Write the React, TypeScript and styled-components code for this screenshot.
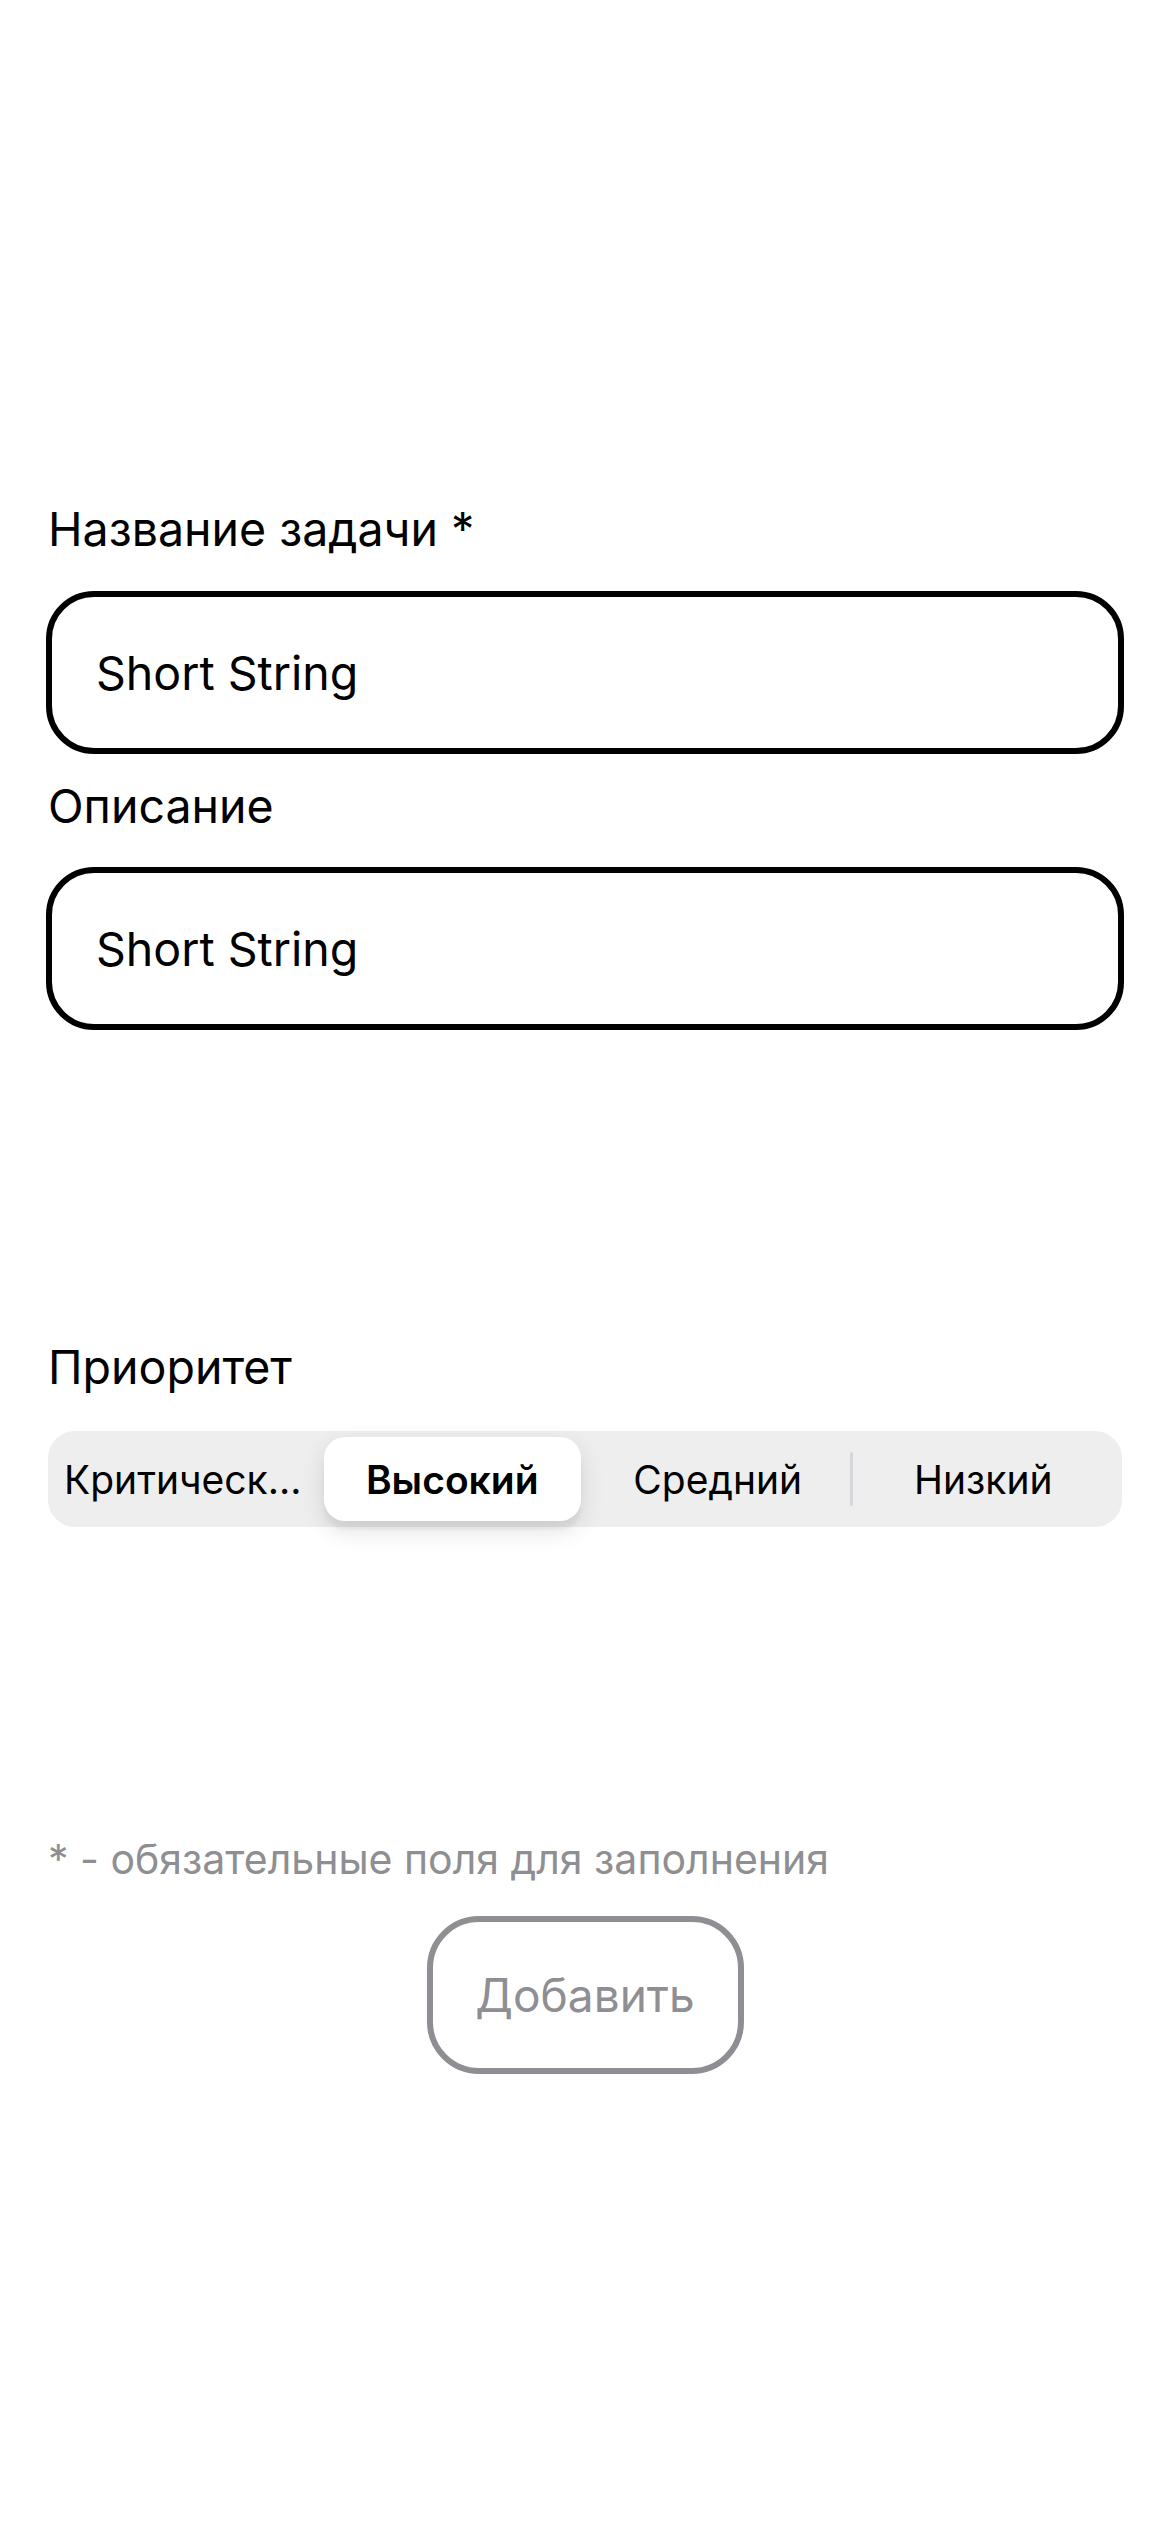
import React from "react";
import styled, { createGlobalStyle } from "styled-components";

const GlobalStyle = createGlobalStyle`
  html, body {
    margin: 0;
    padding: 0;
    background: #ffffff;
  }
  body {
    font-family: Inter, "Noto Sans", "Liberation Sans", sans-serif;
    color: #000000;
    -webkit-font-smoothing: antialiased;
  }
  * { box-sizing: border-box; }
`;

const Page = styled.main`
  width: 1170px;
  min-height: 2532px;
  padding: 502px 46px 0 46px;
  display: flex;
  flex-direction: column;
`;

const Field = styled.section<{ $gap: number; $top: number }>`
  display: flex;
  flex-direction: column;
  gap: ${(p) => p.$gap}px;
  margin-top: ${(p) => p.$top}px;
`;

const Label = styled.label`
  display: block;
  font-size: 46.5px;
  line-height: 54px;
  height: 54px;
  padding-left: 2px;
  font-weight: 400;
  color: #000;
`;

const TextBox = styled.input`
  display: block;
  width: 100%;
  height: 163px;
  border: 6px solid #000;
  border-radius: 48px;
  padding: 0 44px;
  font-family: inherit;
  font-size: 46.5px;
  color: #000;
  background: #fff;
  outline: none;
`;

const Segmented = styled.div`
  display: grid;
  grid-template-columns: repeat(4, 1fr);
  height: 96px;
  margin: 0 2px;
  padding: 6px;
  background: #eeeeef;
  border-radius: 27px;
`;

const Segment = styled.div<{ $selected?: boolean; $divider?: boolean; $truncated?: boolean }>`
  position: relative;
  display: flex;
  align-items: center;
  justify-content: ${(p) => (p.$truncated ? "flex-start" : "center")};
  padding-left: ${(p) => (p.$truncated ? "6px" : "0")};
  margin: 0 4px;
  border-radius: 21px;
  font-size: 39px;
  font-weight: ${(p) => (p.$selected ? 600 : 400)};
  color: #000;
  white-space: nowrap;
  background: ${(p) => (p.$selected ? "#ffffff" : "transparent")};
  box-shadow: ${(p) =>
    p.$selected
      ? "0 9px 24px rgba(0,0,0,0.12), 0 9px 3px rgba(0,0,0,0.04)"
      : "none"};

  &::before {
    content: "";
    display: ${(p) => (p.$divider ? "block" : "none")};
    position: absolute;
    left: -5px;
    top: 15px;
    bottom: 15px;
    width: 3px;
    border-radius: 2px;
    background: #d6d6da;
  }
`;

const Footnote = styled.p`
  margin: 309px 0 0 0;
  padding-left: 2px;
  font-size: 41px;
  line-height: 46px;
  color: #8e8e93;
`;

const AddButton = styled.button`
  align-self: center;
  margin-top: 34px;
  width: 317px;
  height: 158px;
  border: 6px solid #8e8e93;
  border-radius: 52px;
  background: #fff;
  font-family: inherit;
  font-size: 46px;
  color: #8e8e93;
  cursor: default;
`;

const priorities = [
  { label: "Критическ...", selected: false, divider: false, truncated: true },
  { label: "Высокий", selected: true, divider: false, truncated: false },
  { label: "Средний", selected: false, divider: false, truncated: false },
  { label: "Низкий", selected: false, divider: true, truncated: false },
];

export default function App() {
  return (
    <>
      <GlobalStyle />
      <Page>
        <Field $gap={35} $top={0}>
          <Label>Название задачи *</Label>
          <TextBox readOnly value="Short String" />
        </Field>
        <Field $gap={34} $top={25}>
          <Label>Описание</Label>
          <TextBox readOnly value="Short String" />
        </Field>
        <Field $gap={37} $top={310}>
          <Label>Приоритет</Label>
          <Segmented>
            {priorities.map((p) => (
              <Segment
                key={p.label}
                $selected={p.selected}
                $divider={p.divider}
                $truncated={p.truncated}
              >
                {p.label}
              </Segment>
            ))}
          </Segmented>
        </Field>
        <Footnote>* - обязательные поля для заполнения</Footnote>
        <AddButton type="button">Добавить</AddButton>
      </Page>
    </>
  );
}
